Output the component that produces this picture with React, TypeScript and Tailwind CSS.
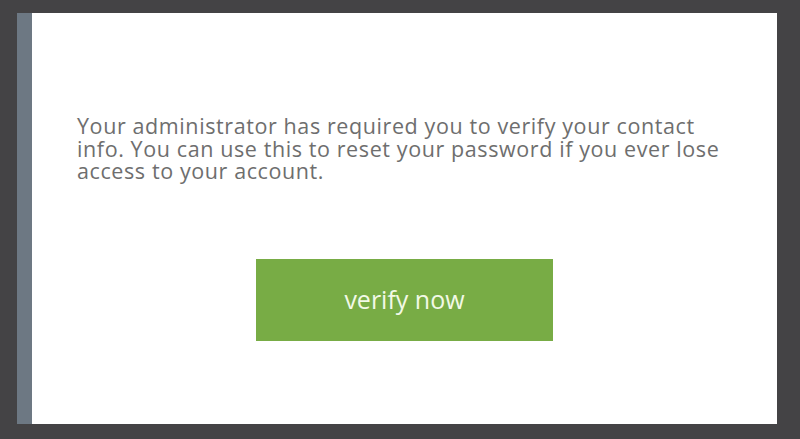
export default function App() {
  return (
    <div className="w-[800px] h-[439px] bg-[#444345] pt-[13px] pl-[17px]" style={{ fontFamily: '"Open Sans", "Noto Sans", sans-serif' }}>
      <div className="flex w-[760px] h-[411px] bg-white">
        {/* left accent stripe */}
        <div className="w-[15px] bg-[#6d7883]" />
        <div className="flex-1 flex flex-col pl-[45px] pt-[102px]">
          <p className="text-[21.5px] leading-[22.5px] text-[#6e6e6e] whitespace-nowrap tracking-[0.6px]">
            Your administrator has required you to verify your contact
            <br />
            info. You can use this to reset your password if you ever lose
            <br />
            access to your account.
          </p>
          <div className="mt-[76px] pl-[179px]">
            <button className="w-[297px] h-[82px] bg-[#78ac45] text-[#f2f9e6] text-[25px] flex items-center justify-center">
              verify now
            </button>
          </div>
        </div>
      </div>
    </div>
  );
}
